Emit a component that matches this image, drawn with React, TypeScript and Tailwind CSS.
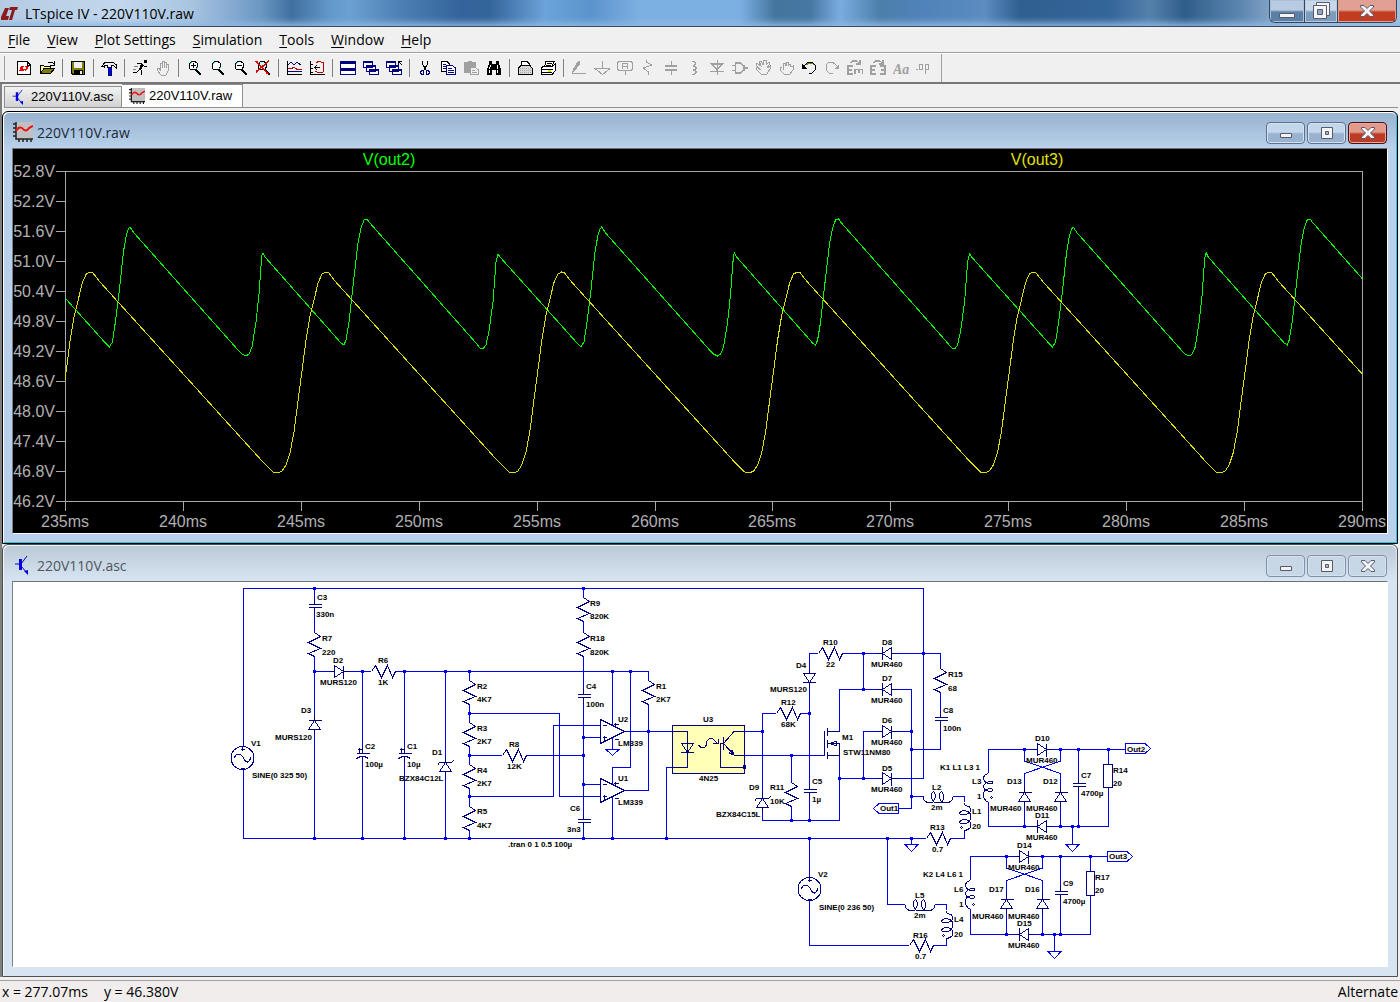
import type { ReactNode } from "react";

const menus = ["File", "View", "Plot Settings", "Simulation", "Tools", "Window", "Help"];

const xTicks = [235, 240, 245, 250, 255, 260, 265, 270, 275, 280, 285, 290];
const yTicks = ["52.8", "52.2", "51.6", "51.0", "50.4", "49.8", "49.2", "48.6", "48.0", "47.4", "46.8", "46.2"];

// one 20ms cycle of V(out2), starting on the first tall peak
const greenCycle = [
  [130, 227], [132, 230], [134, 233], [238, 350], [242, 354], [246, 356], [249, 354], [252, 347], [256, 322],
  [259, 294], [261, 266], [262, 255], [263, 253], [265, 257], [341, 343], [344, 345], [346, 340], [349, 322],
  [353, 286], [358, 243], [361, 228], [364, 220], [367, 219], [369, 222], [476, 343], [480, 348], [483, 349],
  [486, 345], [489, 331], [493, 302], [496, 262], [498, 254], [500, 257], [577, 343], [581, 347], [584, 342],
  [587, 322], [591, 290], [595, 252], [598, 235], [600, 229],
];

const yellowCycle = [
  [90, 272], [93, 273], [96, 277], [100, 282], [262, 461], [268, 467], [273, 472], [278, 473], [282, 471],
  [286, 465], [290, 453], [294, 432], [298, 401], [302, 371], [306, 340], [310, 316], [314, 300], [318, 283], [322, 274],
];

const points = (cycle: number[][], period: number) => {
  const out: string[] = [];
  for (let n = -1; n < 7; n++) {
    cycle.forEach(([x, y]) => out.push(`${x + n * period},${y}`));
  }
  return out.join(" ");
};

const Plot = () => (
  <svg
    className="block w-full h-auto bg-black"
    viewBox="13 149 1374 384"
    fontFamily="'Liberation Sans', Arial, sans-serif"
    fontSize="16"
    role="img"
    aria-label="Waveforms of V(out2) and V(out3)"
  >
    <clipPath id="area">
      <rect x="65" y="171" width="1297" height="330" />
    </clipPath>
    <g shapeRendering="crispEdges" fill="none" stroke="#a8a8a8">
      <rect x="65.5" y="171.5" width="1297" height="330" />
      {yTicks.map((v, i) => (
        <path key={v} d={`M56 ${171.5 + i * 30}h9`} />
      ))}
      {xTicks.map((t, i) => (
        <path key={t} d={`M${Math.round(65 + i * 117.9) + 0.5} 501v10`} />
      ))}
      <g clipPath="url(#area)">
        <polyline points={points(greenCycle, 471.6)} stroke="#00ff00" />
        <polyline points={points(yellowCycle, 235.8)} stroke="#e0e000" />
      </g>
    </g>
    <g fill="#b0b0b0">
      {yTicks.map((v, i) => (
        <text key={v} x="55" y={177 + i * 30} textAnchor="end">{v}V</text>
      ))}
      {xTicks.map((t, i) => (
        <text key={t} x={65 + Math.round(i * 117.9)} y="527" textAnchor="middle">{t}ms</text>
      ))}
    </g>
    <text x="389" y="165" textAnchor="middle" fill="#00ff00">V(out2)</text>
    <text x="1037" y="165" textAnchor="middle" fill="#e0e000">V(out3)</text>
  </svg>
);

const wires = [
  // buses
  "M243.5 746V588.5H923.5V778.5H892 M243.5 770V838.5H926 M314.5 588V604 M314.5 608V632 M314.5 656V720 M314.5 730V838",
  "M314.5 671.5H335 M343 671.5H371 M395 671.5H648.5V680 M362.5 671V753 M362.5 758V838 M404.5 671V753 M404.5 758V838",
  "M445.5 671V762 M445.5 772V838",
  // divider
  "M469.5 671V680 M469.5 704V722 M469.5 746V764 M469.5 788V806 M469.5 830V838",
  "M469.5 713.5H559.5V796.5H600 M469.5 796.5H553.5V725.5H600 M469.5 755.5H502 M526 755.5H583",
  "M583.5 588V597 M583.5 621V632 M583.5 656V694 M583.5 698V819 M583.5 823V838 M583.5 737.5H600 M583.5 784.5H600",
  "M612.5 671V725 M612.5 738V749 M630.5 671V767.5H612.5V784 M612.5 797V838 M624 731.5H673 M648.5 704V790.5H624",
  // opto coupler
  "M673 767.5H666.5V838 M744 731.5H762.5 M776 713.5H762.5V798 M762.5 808V820.5H839.5V756 M744 755.5H824 M791.5 755V782 M791.5 806V820",
  "M800 713.5H809.5 M809.5 682V789 M809.5 793V820 M809.5 674V653.5H818 M842 653.5H883 M892 653.5H940.5V668",
  "M839.5 731V689.5H883 M863.5 653V689 M892 689.5H911.5V808.5H899 M883 731.5H863.5V778 M892 731.5H911 M839.5 778.5H883",
  "M940.5 692V717 M940.5 721V749.5H911.5 M911.5 796.5H923.5 M952.5 796.5H964.5V802 M964.5 832V838.5H950 M911.5 838V844",
  // second source
  "M809.5 838V878 M809.5 901V945.5H909 M933 945.5H946.5V940 M887.5 838V904.5H905 M934.5 904.5H946.5V910",
  // bridge 1
  "M988.5 773V749.5H1037 M1046 749.5H1125 M988.5 802V826.5H1037 M1046 826.5H1108.5V788 M1108.5 749V765",
  "M1078.5 749V783 M1078.5 787V826 M1024.5 749V761L1060.5 773.5V792 M1060.5 749V761L1024.5 773.5V792 M1024.5 802V826 M1060.5 802V826 M1072.5 826V844",
  // bridge 2
  "M970.5 880V856.5H1019 M1028 856.5H1107 M970.5 909V934.5H1019 M1028 934.5H1090.5V895 M1090.5 856V872",
  "M1060.5 856V891 M1060.5 895V934 M1006.5 856V868L1042.5 880.5V899 M1042.5 856V868L1006.5 880.5V899 M1006.5 909V934 M1042.5 909V934 M1054.5 934V951",
  // grounds and port flags
  "M606 749.5H619L612.5 755.5Z M905 844.5H918L911.5 851.5Z M1066 844.5H1079L1072.5 851.5Z M1048 951.5H1061L1054.5 958.5Z",
  "M898.5 803.5H879L873.5 808.5L879 813.5H898.5Z M1125.5 743.5H1145L1150.5 748.5L1145 753.5H1125.5Z M1107.5 851.5H1127L1132.5 856.5L1127 861.5H1107.5Z",
];

const nodes = [
  [314, 588], [583, 588], [314, 671], [362, 671], [404, 671], [445, 671], [469, 671], [612, 671], [630, 671],
  [314, 838], [362, 838], [404, 838], [445, 838], [469, 838], [583, 838], [612, 838], [666, 838], [809, 838],
  [887, 838], [911, 838], [469, 713], [469, 755], [469, 796], [583, 737], [583, 755], [583, 784], [648, 731],
  [762, 731], [809, 713], [791, 755], [791, 820], [809, 820], [863, 653], [923, 653], [863, 689], [911, 731],
  [911, 749], [911, 796], [863, 778], [839, 778], [1024, 749], [1060, 749], [1078, 749], [1108, 749],
  [1024, 826], [1060, 826], [1072, 826], [1078, 826], [1006, 856], [1042, 856], [1060, 856], [1090, 856],
  [1006, 934], [1042, 934], [1054, 934], [1060, 934],
];

// top end of each vertical resistor, left end of each horizontal one
const resistorsV = [[314, 632], [469, 680], [469, 722], [469, 764], [469, 806], [583, 597], [583, 632], [648, 680], [791, 782], [940, 668]];
const resistorsH = [[371, 671], [502, 755], [776, 713], [818, 653], [926, 838], [909, 945]];
const capacitors = [[314, 604], [583, 694], [583, 819], [809, 789], [940, 717], [1078, 783], [1060, 891]];
const polarCaps = [[362, 753], [404, 753]];
// x, y of the cathode bar and the rotation from pointing up
const diodes = [
  [314, 720, 0], [343, 671, 90], [809, 682, 180], [882, 653, 270], [882, 689, 270], [891, 731, 90], [891, 778, 90],
  [1046, 749, 90], [1037, 826, 270], [1024, 792, 0], [1060, 792, 0],
  [1028, 856, 90], [1019, 934, 270], [1006, 899, 0], [1042, 899, 0],
];
const zeners = [[445, 762], [762, 798]];
const sources = [[242, 758], [809, 889]];
const coilsH = [[923, 796], [905, 904]];
const coilsRight = [[964, 802], [946, 910]];
const coilsLeft = [[988, 773], [970, 880]];
const comparators = [[600, 719], [600, 778]];

const labels: [number, number, string][] = [
  [317, 600, "C3"], [316, 617, "330n"], [322, 641, "R7"], [322, 655, "220"], [333, 663, "D2"], [320, 685, "MURS120"],
  [378, 663, "R6"], [378, 685, "1K"], [301, 713, "D3"], [275, 740, "MURS120"], [251, 746, "V1"],
  [252, 778, "SINE(0 325 50)"], [365, 749, "C2"], [365, 767, "100µ"], [407, 749, "C1"], [407, 767, "10µ"],
  [432, 755, "D1"], [399, 781, "BZX84C12L"], [477, 689, "R2"], [477, 702, "4K7"], [477, 731, "R3"], [477, 744, "2K7"],
  [477, 773, "R4"], [477, 786, "2K7"], [477, 814, "R5"], [477, 828, "4K7"], [509, 747, "R8"], [507, 769, "12K"],
  [590, 606, "R9"], [590, 619, "820K"], [590, 641, "R18"], [590, 655, "820K"], [586, 689, "C4"], [586, 707, "100n"],
  [618, 722, "U2"], [618, 746, "LM339"], [618, 781, "U1"], [618, 805, "LM339"], [656, 689, "R1"], [656, 702, "2K7"],
  [570, 811, "C6"], [567, 832, "3n3"], [508, 847, ".tran 0 1 0.5 100µ"], [703, 722, "U3"], [699, 781, "4N25"],
  [796, 668, "D4"], [770, 692, "MURS120"], [823, 645, "R10"], [826, 667, "22"], [781, 705, "R12"], [781, 727, "68K"],
  [749, 790, "D9"], [716, 817, "BZX84C15L"], [770, 790, "R11"], [770, 804, "10K"], [812, 784, "C5"], [812, 802, "1µ"],
  [842, 740, "M1"], [843, 755, "STW11NM80"], [882, 645, "D8"], [871, 667, "MUR460"], [882, 681, "D7"],
  [871, 703, "MUR460"], [882, 723, "D6"], [871, 745, "MUR460"], [882, 771, "D5"], [871, 792, "MUR460"],
  [948, 677, "R15"], [948, 691, "68"], [943, 713, "C8"], [943, 731, "100n"], [940, 770, "K1 L1 L3 1"],
  [932, 790, "L2"], [931, 810, "2m"], [972, 814, "L1"], [972, 829, "20"], [930, 830, "R13"], [932, 852, "0.7"],
  [972, 784, "L3"], [977, 799, "1"], [880, 811, "Out1"], [818, 877, "V2"], [819, 910, "SINE(0 236 50)"],
  [923, 877, "K2 L4 L6 1"], [915, 898, "L5"], [914, 918, "2m"], [954, 922, "L4"], [954, 937, "20"],
  [913, 938, "R16"], [915, 959, "0.7"], [954, 892, "L6"], [959, 907, "1"],
  [1035, 741, "D10"], [1026, 763, "MUR460"], [1007, 784, "D13"], [990, 811, "MUR460"], [1043, 784, "D12"],
  [1026, 811, "MUR460"], [1035, 818, "D11"], [1026, 840, "MUR460"], [1081, 778, "C7"], [1081, 796, "4700µ"],
  [1113, 773, "R14"], [1113, 786, "20"], [1127, 752, "Out2"], [1017, 848, "D14"], [1008, 870, "MUR460"],
  [989, 892, "D17"], [972, 919, "MUR460"], [1025, 892, "D16"], [1008, 919, "MUR460"], [1017, 926, "D15"],
  [1008, 948, "MUR460"], [1063, 886, "C9"], [1063, 904, "4700µ"], [1095, 880, "R17"], [1095, 893, "20"],
  [1109, 859, "Out3"],
];

const Parts = ({ at, d }: { at: number[][]; d: string }) => (
  <>
    {at.map(([x, y, turn = 0]) => (
      <path key={`${x}-${y}`} transform={`translate(${x + 0.5} ${y + 0.5}) rotate(${turn})`} d={d} />
    ))}
  </>
);

const Schematic = () => (
  <svg
    className="block w-full h-auto bg-white"
    viewBox="13 582 1374 384"
    fontFamily="'Liberation Sans', Arial, sans-serif"
    fontSize="8"
    fontWeight="bold"
    role="img"
    aria-label="Converter schematic"
  >
    <g shapeRendering="crispEdges" fill="none" stroke="#0000ee">
      <rect x="672.5" y="725.5" width="72" height="48" fill="#ffffb8" stroke="#000080" />
      <path d={wires.join(" ")} />
      {nodes.map(([x, y]) => (
        <rect key={`${x}-${y}`} x={x - 1} y={y - 1} width="3" height="3" fill="#0000ee" stroke="none" />
      ))}
    </g>
    <g fill="none" stroke="#000080" shapeRendering="crispEdges">
      <Parts at={resistorsV} d="M0 0L6 4L-6 10L6 16L-6 21L0 24" />
      <Parts at={resistorsH} d="M0 0L4 -6L10 6L16 -6L21 6L24 0" />
      <Parts at={capacitors} d="M0 -6V0M-6 0H7M-6 3H7M0 3V9" />
      <Parts at={polarCaps} d="M0 -6V0M-6 0H7M-6 5Q0 1 6 5M0 3V9M-5 -4H0M-3 -6V-1" />
      <Parts at={diodes} d="M0 -6V0M-6 0H7M0 0L-6 9H6L0 0M0 9V14" />
      <Parts at={zeners} d="M0 -6V0M-8 3L-6 0H6L8 -2M0 0L-6 9H6L0 0M0 9V14" />
      <Parts at={comparators} d="M0 0V24L24 12ZM2 6H6M2 18H6M4 16V21M13 5H18M15 3V8M14 20H18" />
      <Parts at={coilsH} d="M0 0V3Q1 5 4 6H9Q12 3 12 -1Q11 -5 10 -5Q8 -4 8 0Q9 5 11 6H18Q21 3 20 -1Q19 -5 18 -5Q16 -4 16 0Q17 5 19 6H25Q28 5 29 3V0" />
      <Parts at={coilsRight} d="M0 0V2Q2 4 5 4L6 7V9Q4 12 0 12Q-5 12 -5 11Q-4 8 0 8Q5 9 6 12V17Q4 21 0 21Q-5 21 -5 20Q-4 17 0 17Q5 18 6 20V25Q3 28 0 28V30M-3 24L-2 25L-3 26L-4 25Z" />
      <Parts at={coilsLeft} d="M0 0Q-5 1 -5 5Q-4 9 0 10H4Q5 8 3 8Q-2 8 -5 12V14Q-3 18 3 18Q5 16 3 15Q-3 15 -5 19V23Q-4 27 0 29M3 23L4 24L3 25L2 24Z" />
      {/* sine sources */}
      {sources.map(([x, y]) => (
        <g key={x} transform={`translate(${x + 0.5} ${y})`}>
          <circle r="11.5" />
          <path d="M-8 0Q-7 -4 -4 -4Q-1 -4 1 0Q3 4 5 4Q8 3 8 -1M-2 -9H2M0 -12V-7M-2 10H2" />
        </g>
      ))}
      <path d="M1103.5 764.5H1112.5V787.5H1103.5ZM1086.5 871.5H1094.5V895.5H1086.5Z" />
      {/* 4N25 internals */}
      <path d="M672 731.5H687.5V767.5H672M681.5 743.5H693.5L687.5 752.5ZM681 752.5H694M744 731.5H734L723.5 743.5L734.5 755.5H744M723.5 737V750M723 743.5H720.5V767.5H744" />
      <path d="M698.5 745Q700 748 704 747.5Q707 746 706 743Q708 738 712 738L717 743M713 743H718V739M734 755L729 753L732 750Z" />
      <rect x="743.5" y="765.5" width="2" height="3" />
      {/* MOSFET */}
      <path d="M824.5 731V756M827.5 728V736M827.5 740V748M827.5 752V759M828 731.5H839.5M828 755.5H839.5M828 743.5H839.5V756M829 743.5L836 741.5V745.5Z" />
    </g>
    <g fill="#000000">
      {labels.map(([x, y, text]) => (
        <text key={`${x}-${y}`} x={x} y={y}>{text}</text>
      ))}
    </g>
  </svg>
);

const LogoIcon = () => (
  <svg className="w-5 h-4" viewBox="0 0 20 16">
    <path d="M5 2H9L6 10H9L8 14H1V11ZM10 1H18L17 4H15L12 14H9L12 4H9Z" fill="#8b1a1a" />
  </svg>
);

const PlotIcon = ({ className }: { className: string }) => (
  <svg className={className} viewBox="0 0 20 20">
    <rect x="2" width="18" height="18" fill="#c0c0c0" />
    <path d="M3 0V17H20M0 2H3M0 6H3M0 10H3M0 14H3M6 17V20M10 17V20M14 17V20M18 17V20" stroke="#222" strokeWidth="1.5" fill="none" />
    <path d="M3 9Q6 4 9 6Q13 11 16 6L20 4" stroke="#ee1111" strokeWidth="2" fill="none" />
  </svg>
);

const TransistorIcon = ({ className }: { className: string }) => (
  <svg className={className} viewBox="0 0 20 20">
    <path d="M2 9H7M8 9L14 1M8 11L14 18" stroke="#0000cc" fill="none" />
    <path d="M6 4H9V15H6ZM11 16L15 15V20Z" fill="#0000dd" />
  </svg>
);

const G = "#a0a0a0";
const N = "#000080";
const lens = "M3 5L5 2L8 1L11 3L12 6L10 9L7 10L4 9Z";

// each glyph is drawn on a 16x16 grid
const tools: ([string, ReactNode] | null)[] = [
  ["New Schematic", <><path d="M1.5 1.5H11L14.5 5V14.5H1.5Z" fill="#fff" stroke="#000" /><path d="M11 1V5H15" stroke="#000" /><path d="M5 6H8L7 9H9L8 11H3ZM9 6H13L12 8L10 11H9L10 8Z" fill="#e00" /></>],
  ["Open", <><path d="M1.5 13V5H4L5 6H11V8" stroke="#000" fill="#ffffa0" /><path d="M1.5 13.5L5 8.5H15.5L11.5 13.5Z" fill="#808000" stroke="#000" /><path d="M9 3L11 2H13L15 4M15 1V5H11" stroke="#000" /></>],
  null,
  ["Save", <><path d="M1.5 1.5H14.5V14.5H3L1.5 13Z" fill="#808000" stroke="#000" /><path d="M4 2H12V8H4Z" fill="#efefef" /><path d="M4 10H13V15H4Z" fill="#000" /><path d="M10 11H12V14H10Z" fill="#efefef" /></>],
  null,
  ["Control Panel", <><path d="M.5 6.5L4 2.5H12L15.5 5V8L12 5.5H10V7H6V5.5H3V7Z" fill="#efefef" stroke="#000" /><path d="M7 7H10V15H7Z" fill="#0000e0" stroke="#000080" /></>],
  null,
  ["Run", <><path d="M12 0H15V3H12Z" fill="#000" /><path d="M5 3.5H9L11 5L8 9L10 11L9 15M11 5L13 7L15 6M8 9L5 12H1" stroke="#000" /><path d="M9 4L12 5L9 10L7 9Z" fill="#000" /><path d="M2 6.5H6M1 9.5H4" stroke="#808080" /></>],
  ["Halt", <path d="M5 9V3H7V8V1H9V8V2H11V8V4H13V11L11 15H6L2 10V8H4L6 11" stroke={G} />],
  null,
  ["Zoom In", <><path d={lens} fill="#fff" stroke="#000" /><path d="M5 5.5H10M7.5 3V8" stroke="#000" /><path d="M4 4L6 2M10 9L12 7" stroke="#00d0d0" /><path d="M10 10L15 15" stroke="#000" strokeWidth="2" /></>],
  ["Pan", <><path d={lens} fill="#fff" stroke="#000" /><path d="M4 4L6 2M10 9L12 7" stroke="#00d0d0" /><path d="M10 10L15 15" stroke="#000" strokeWidth="2" /></>],
  ["Zoom Out", <><path d={lens} fill="#fff" stroke="#000" /><path d="M4 4L6 2" stroke="#00d0d0" /><path d="M5 5.5H10" stroke="#000" /><path d="M10 10L15 15" stroke="#000" strokeWidth="2" /></>],
  ["Zoom Fit", <><path d={lens} fill="#bff" stroke="#000" /><path d="M10 10L15 15" stroke="#000" strokeWidth="2" /><path d="M1 1L13 14M14 1L1 12" stroke="#e00000" strokeWidth="1.6" /></>],
  null,
  ["Autorange", <><path d="M1.5 1V15M1 14.5H16" stroke="#000" /><path d="M2 5L5 2L8 5L11 2L15 5" stroke={N} /><path d="M2 8.5H6L8 7L11 9.5H16" stroke="#c00000" /><path d="M2 11.5H6L8 12L11 11.5H16" stroke={N} /></>],
  ["Zoom Plot", <><path d="M1.5 1V15M1 14.5H16M1 4.5H4M1 8.5H4M1 12.5H4" stroke="#000" /><path d="M7 2.5L10 1.5L14 2.5V12L9 12.5L6 11" stroke="#b00000" /><path d="M5.5 7.5H11M8 5L5.5 7.5L8 10" stroke="#000" /></>],
  null,
  ["Tile Windows", <><path d="M.5 1.5H15.5V14.5H.5Z" fill="#fff" stroke={N} /><path d="M1 1H15V4H1ZM1 8H15V11H1Z" fill={N} /></>],
  ["Cascade Windows", <><path d="M.5 1.5H9.5V7.5H.5ZM3.5 5.5H12.5V11.5H3.5ZM6.5 9.5H15.5V14.5H6.5Z" fill="#fff" stroke={N} /><path d="M0 1H10V3H0ZM3 5H13V7H3ZM6 9H16V11H6Z" fill={N} /></>],
  ["Close Windows", <><path d="M.5 1.5H9.5V7.5H.5ZM3.5 5.5H12.5V11.5H3.5ZM6.5 9.5H15.5V14.5H6.5Z" fill="#fff" stroke={N} /><path d="M0 1H10V3H0ZM3 5H13V7H3ZM6 9H16V11H6Z" fill={N} /><path d="M12.5 5V1.5H16M12 1L16 5" stroke="#000" /></>],
  null,
  ["Cut", <><path d="M5.5 1V4L9 10M10.5 1V4L7 10" stroke="#000" /><path d="M4.5 10.5H6.5V14.5H4.5L3.5 12.5ZM9.5 10.5H11.5L12.5 12.5L11.5 14.5H9.5Z" stroke={N} /></>],
  ["Copy", <><path d="M1.5 1.5H7L9.5 4V11.5H1.5Z" fill="#fff" stroke="#000" /><path d="M6.5 5.5H12L15.5 8V14.5H6.5Z" fill="#fff" stroke={N} /><path d="M3 4.5H6M3 6.5H6M3 8.5H6M8 8.5H12M8 10.5H14M8 12.5H14" stroke={N} /></>],
  ["Paste", <><path d="M1 2H5V1H9V2H13V13H1Z" fill={G} /><path d="M7.5 7.5H12L15.5 10V14.5H7.5Z" fill="#efefef" stroke={G} /><path d="M9 10.5H12M9 12.5H14" stroke={G} /></>],
  ["Find", <><path d="M3 1H6V4H10V1H13V4L15 9V15H10V10H6V15H1V9L3 4Z" fill="#000" /><path d="M4.5 5L3.5 9M11.5 5V9M3.5 10V13M11.5 10V13" stroke="#fff" /></>],
  null,
  ["Print Setup", <><path d="M4.5 6V1.5H10L12.5 4V6" fill="#fff" stroke="#000" /><path d="M1.5 8L4 5.5H13L15 8V14.5H1.5Z" fill="#d8d8d8" stroke="#000" /><path d="M3 8.5H14M3 10.5H14M3 12.5H14" stroke="#aaa" strokeDasharray="1 1" /></>],
  ["Print", <><path d="M4.5 7L6 1.5H14L12 7" fill="#fff" stroke="#000" /><path d="M1 8L4 6H13L15 4V11L12 14.5H2L1 13Z" fill="#fff" stroke="#000" /><path d="M1 9.5H13M2 12.5H12M7 3.5H12M6 5.5H11" stroke="#000" /><path d="M8 10H11V12H8Z" fill="#e0e000" /></>],
  null,
  ["Wire", <><path d="M7 1H9V4L4 11L1 13L2 9Z" fill={G} /><path d="M1 13.5H15" stroke={G} /></>],
  ["Ground", <path d="M8.5 1V8M1 8.5H16L8.5 14.5Z" stroke={G} />],
  ["Label Net", <><path d="M2 1.5H14L15.5 3V9L14 10.5H2L.5 9V3Z" stroke={G} /><path d="M8 11V15M5.5 9V4L7 3.5H9L10.5 4V9M6 6.5H10" stroke={G} /></>],
  ["Resistor", <path d="M6.5 0V2L12 5L3 8L8.5 12V15" stroke={G} />],
  ["Capacitor", <><path d="M8 1V6M8 10V15" stroke={G} /><path d="M2 6H14M2 10H14" stroke={G} strokeWidth="2" /></>],
  ["Inductor", <path d="M6 1.5H8L10 3L8 6L11 8L8 10L11 12L8 14.5H6" stroke={G} strokeWidth="1.4" />],
  ["Diode", <><path d="M8 0V15M1 3.5H15M1 11.5H15" stroke={G} /><path d="M3 4H13L8 10Z" stroke={G} strokeWidth="1.6" /></>],
  ["Component", <path d="M3.5 3H8L12 6V10L8 13H3.5ZM0 5.5H3M0 10.5H3M12 8H16" stroke={G} strokeWidth="1.6" />],
  ["Move", <path d="M5 9L1 5L2 3L6 6L4 1H6L8 5L9 0H11V5L14 2L15 4L12 8L15 6V9L12 14H6L1 9L2 7L6 10" stroke={G} />],
  ["Drag", <path d="M5 10V4L7 3L8 6V2H10V6L12 4L13 7L15 6V10L12 14H6L2 10V7H4" stroke={G} />],
  ["Undo", <><path d="M3 6L5 4L8 2H11L14 5V10L11 13H8" stroke="#000" /><path d="M5 5L8 3H11L13 5" stroke="#808000" /><path d="M1 4V9H6Z" fill="#000" /></>],
  ["Redo", <><path d="M13 6L11 4L8 2H5L2 5V10L5 13H9" stroke={G} /><path d="M15 4V9H10Z" fill={G} /></>],
  ["Rotate", <path d="M3 3L6 1H10L13 4M13 0V4H9M6 6H1V14H6M1 10H5M8 14V9.5H16V14M12 10V13" stroke={G} strokeWidth="1.4" />],
  ["Mirror", <path d="M3 3L6 1H10L13 4M13 0V4H9M6 6H1V14H6M1 10H5M10 6H15V14H10M15 10H11" stroke={G} strokeWidth="1.4" />],
  ["Text", <text x="0" y="14" fontSize="14" fontStyle="italic" fontWeight="bold" fontFamily="'Liberation Serif', serif" fill={G}>Aa</text>],
  ["SPICE Directive", <path d="M0 9.5H2M3.5 4.5H6.5V9.5H3.5ZM9.5 14V4.5H12.5V9.5H9.5" stroke={G} />],
];

const Toolbar = () => (
  <div className="flex items-center h-8 pl-1 border-t border-[#a0a0a0] border-b-2 border-b-[#777777] bg-[#f0f0f0] shadow-[inset_0_1px_0_#ffffff]">
    <div className="w-2 pr-1 h-6">
      <div className="h-full w-px bg-[#a0a0a0]" />
    </div>
    {tools.map((tool, i) =>
      tool ? (
        <button key={tool[0]} aria-label={tool[0]} className="flex items-center justify-center w-[23px] h-6 shrink-0">
          <svg className="w-4 h-4" viewBox="0 0 16 16" fill="none" shapeRendering="crispEdges">
            {tool[1]}
          </svg>
        </button>
      ) : (
        <div key={i} className="flex justify-center w-2 h-[18px] shrink-0">
          <div className="w-px bg-[#808080]" />
        </div>
      )
    )}
    <div className="w-px h-7 ml-1.5 bg-[#a0a0a0]" />
  </div>
);

const MinGlyph = () => (
  <svg className="w-4 h-4" viewBox="0 0 16 16">
    <path d="M2.5 8.5H13.5V12.5H2.5Z" fill="#f4f4f4" stroke="#565a6c" />
  </svg>
);

const MaxGlyph = () => (
  <svg className="w-4 h-4" viewBox="0 0 16 16">
    <path d="M2.5 2.5H13.5V13.5H2.5Z" fill="#f4f4f4" stroke="#565a6c" />
    <path d="M6.5 6.5H9.5V9.5H6.5Z" fill="#a8bcd4" stroke="#565a6c" />
  </svg>
);

const CloseGlyph = () => (
  <svg className="w-4 h-4" viewBox="0 0 16 16">
    <path d="M1.5 2.5H5L8 5.5L11 2.5H14.5V4L10.5 8L14.5 12V13.5H11L8 10.5L5 13.5H1.5V12L5.5 8L1.5 4Z" fill="#f4f4f4" stroke="#565a6c" />
  </svg>
);

type ChildProps = { title: string; icon: ReactNode; active?: boolean; children: ReactNode };

const ChildWindow = ({ title, icon, active, children }: ChildProps) => {
  const button = active
    ? "flex items-center justify-center w-[39px] h-[22px] rounded-sm border border-[#5f7192] bg-linear-to-b from-[#c3d6ea] from-45% to-[#98b2d0] to-55% shadow-[inset_0_0_0_1px_#d4e2f0]"
    : "flex items-center justify-center w-[39px] h-[22px] rounded-sm border border-[#8290ac] bg-[#c8d7e6] shadow-[inset_0_0_0_1px_#d5e1ed]";
  const close = active
    ? "flex items-center justify-center w-[39px] h-[22px] rounded-sm border border-[#4a1016] bg-linear-to-b from-[#e39a8c] from-45% to-[#bb3c24] to-55% shadow-[inset_0_0_0_1px_#e8a89c]"
    : button;
  return (
    <section
      className={
        active
          ? "flex flex-col rounded-t-md border border-black bg-[#b9d1ea] shadow-[inset_1px_1px_0_#ffffff,inset_-1px_-1px_0_#22c8e0]"
          : "flex flex-col rounded-t-md border border-[#505050] bg-[#d7e4f1] shadow-[inset_1px_1px_0_#eef4fa]"
      }
    >
      <header
        className={
          active
            ? "flex items-start h-[35px] pt-[9px] px-[9px] m-px mb-0 rounded-t-md bg-linear-to-b from-[#98b3d0] to-[#b9d1ea] text-[#1c2a3c]"
            : "flex items-start h-[35px] pt-[9px] px-[9px] m-px mb-0 rounded-t-md bg-linear-to-b from-[#bccad8] to-[#d7e4f1] text-[#50565e]"
        }
      >
        {icon}
        <h2 className="ml-1 h-[22px] text-sm leading-[22px]">{title}</h2>
        <div className="flex gap-[2px] ml-auto">
          <button className={button} aria-label={`Minimize ${title}`}><MinGlyph /></button>
          <button className={button} aria-label={`Maximize ${title}`}><MaxGlyph /></button>
          <button className={close} aria-label={`Close ${title}`}><CloseGlyph /></button>
        </div>
      </header>
      <div className="mx-[9px] mb-[9px] border border-t-[#707070] border-l-[#808080] border-r-white border-b-white">
        {children}
      </div>
    </section>
  );
};

const TitleBar = () => (
  <header className="flex items-start h-[27px] border-b border-[#3c4a60] bg-[linear-gradient(90deg,#b4cce4_0px,#c2d7ec_120px,#a9c5e0_190px,#8fb2d6_220px,#6b98c4_260px,#40709f_292px,#6298ca_330px,#6ba0d2_350px,#4d80b4_400px,#33639a_460px,#34659a_490px,#6ba3da_545px,#5b93cc_590px,#7db0e2_640px,#7db0e2_740px,#44759f_775px,#4676a2_810px,#7aace0_840px,#4d7faa_880px,#4f82b8_920px,#5c8cc0_985px,#2f5f90_1020px,#35669a_1110px,#5480ac_1150px,#2f5d8a_1185px,#5c86b0_1240px,#a4c0dc_1300px)] shadow-[inset_0_-9px_7px_-6px_#8fb8e2]">
    <div className="flex items-center h-7">
      <LogoIcon />
      <h1 className="ml-[5px] text-sm text-black">LTspice IV - 220V110V.raw</h1>
    </div>
    <div className="flex h-[23px] ml-auto mr-[3px] overflow-hidden border border-t-0 rounded-b-md border-[#35465e]">
      <button aria-label="Minimize" className="flex items-center justify-center w-[35px] border-r border-[#35465e] bg-linear-to-b from-[#b8cbe0] from-45% to-[#5b80a6] to-55% shadow-[inset_0_0_0_1px_#a8c0da]">
        <svg className="w-5 h-5" viewBox="0 0 20 20"><path d="M2.5 12.5H17.5V16.5H2.5Z" fill="#f4f4f4" stroke="#565a6c" /></svg>
      </button>
      <button aria-label="Restore" className="flex items-center justify-center w-[33px] border-r border-[#35465e] bg-linear-to-b from-[#c8d8e8] from-45% to-[#7c9cbe] to-55% shadow-[inset_0_0_0_1px_#b8cce0]">
        <svg className="w-5 h-5" viewBox="0 0 20 20">
          <path d="M5.5 1.5H18.5V14.5H5.5Z" fill="#f4f4f4" stroke="#565a6c" />
          <path d="M2.5 4.5H15.5V17.5H2.5Z" fill="#f4f4f4" stroke="#565a6c" />
          <path d="M6.5 8.5H11.5V13.5H6.5Z" fill="#8ca8c8" stroke="#565a6c" />
        </svg>
      </button>
      <button aria-label="Close" className="flex items-center justify-center w-[58px] bg-linear-to-b from-[#e2a094] from-45% to-[#c23c22] to-55% shadow-[inset_0_0_0_1px_#e0a090]">
        <CloseGlyph />
      </button>
    </div>
  </header>
);

const App = () => {
  return (
    <div className="flex flex-col w-full bg-[#f0f0f0] text-black font-['Open_Sans','Noto_Sans',sans-serif]">
      <TitleBar />
      <nav className="flex items-center h-[25px] pl-2 gap-[17px] text-sm">
        {menus.map((name) => (
          <button key={name}>
            <span className="underline underline-offset-2">{name[0]}</span>
            {name.slice(1)}
          </button>
        ))}
      </nav>
      <Toolbar />
      <main className="flex flex-col px-0.5 shadow-[inset_2px_0_0_#808080]">
        <div role="tablist" className="flex items-end h-6 ml-0.5 mb-[3px] border-b border-[#8c8e94] font-['Liberation_Sans',Arial,sans-serif] text-[13px]">
          <button role="tab" aria-selected="false" className="flex items-center h-[21px] w-[118px] pl-1.5 gap-1 border border-b-0 border-[#8c8e94] bg-linear-to-b from-[#f2f2f2] to-[#d2d2d2]">
            <TransistorIcon className="w-4 h-4" />
            <span>220V110V.asc</span>
          </button>
          <button role="tab" aria-selected="true" className="flex items-center h-[23px] w-[121px] pl-[7px] gap-1 border border-l-0 border-b-0 border-[#8c8e94] bg-white">
            <PlotIcon className="w-4 h-4" />
            <span>220V110V.raw</span>
          </button>
        </div>
        <ChildWindow title="220V110V.raw" active icon={<PlotIcon className="w-5 h-5" />}>
          <Plot />
        </ChildWindow>
        <ChildWindow title="220V110V.asc" icon={<TransistorIcon className="w-5 h-5" />}>
          <Schematic />
        </ChildWindow>
      </main>
      <footer className="flex items-center h-[22px] mt-[3px] px-0.5 gap-4 border-t border-[#a0a0a0] bg-[#f1eded] text-sm">
        <span>x = 277.07ms</span>
        <span>y = 46.380V</span>
        <span className="ml-auto">Alternate</span>
      </footer>
    </div>
  );
};

export default App;
